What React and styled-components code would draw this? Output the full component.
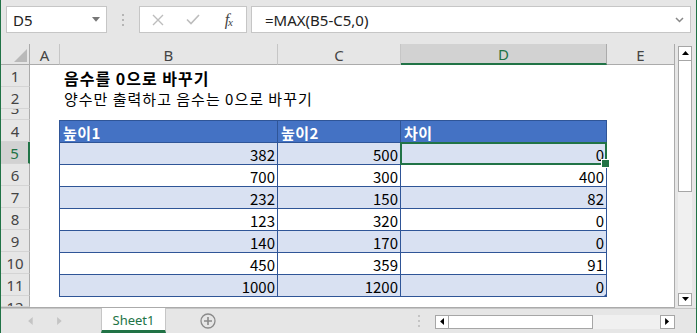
import styled, { createGlobalStyle, css } from 'styled-components';

const GREEN = '#217346';
const UI_FONT = `"Segoe UI", "Noto Sans", "Noto Sans CJK KR", sans-serif`;
const CELL_FONT = `"Noto Sans CJK KR", "Malgun Gothic", sans-serif`;

const GlobalStyle = createGlobalStyle`
  html, body {
    margin: 0;
    padding: 0;
    background: #fff;
  }
  * {
    box-sizing: border-box;
  }
`;

const Window = styled.div`
  width: 697px;
  height: 333px;
  display: flex;
  flex-direction: column;
  background: #e6e6e6;
  border-left: 1px solid ${GREEN};
  border-right: 1px solid ${GREEN};
  overflow: hidden;
  font-family: ${UI_FONT};
`;

/* ---------- formula bar ---------- */

const FormulaBar = styled.div`
  height: 44px;
  flex: none;
  display: flex;
  align-items: flex-start;
  padding: 6px 0 0 5px;
`;

const Box = styled.div`
  height: 27px;
  background: #fff;
  border: 1px solid #c6c6c6;
  display: flex;
  align-items: center;
`;

const NameBox = styled(Box)`
  width: 101px;
  padding: 0 6px;
  justify-content: space-between;
  font-size: 15px;
  color: #222;
`;

const Grip = styled.div`
  width: 32px;
  height: 27px;
  display: flex;
  align-items: center;
  justify-content: center;
`;

const FnBox = styled(Box)`
  width: 108px;
`;

const FnSlot = styled.div`
  flex: 1;
  display: flex;
  align-items: center;
  justify-content: center;
  color: #555;
`;

const Fx = styled.span`
  font-family: 'Liberation Serif', serif;
  font-style: italic;
  font-size: 16px;
  color: #444;
  letter-spacing: -1px;

  & > small {
    font-size: 11px;
    vertical-align: -1px;
  }
`;

const FormulaInput = styled(Box)`
  width: 440px;
  margin-left: 4px;
  padding: 0 6px 0 13px;
  justify-content: space-between;
  font-size: 15px;
  color: #222;
`;

/* ---------- sheet ---------- */

const SheetRow = styled.div`
  height: 264px;
  flex: none;
  display: flex;
`;

const Grid = styled.div`
  width: 674px;
  height: 264px;
  display: grid;
  grid-template-columns: 29px 30px 218px 123px 206px 67px;
  grid-template-rows: 21px 22px 22px 11px repeat(8, 22px) 11px;
  background: #fff;
  border-right: 1px solid #ababab;
  border-bottom: 1px solid #ababab;
  overflow: hidden;
  position: relative;
`;

const Corner = styled.div`
  background: #e6e6e6;
  border-right: 1px solid #ababab;
  border-bottom: 1px solid #ababab;
  display: flex;
  align-items: flex-end;
  justify-content: flex-end;
  padding: 0 2px 2px 0;
`;

const ColHeader = styled.div`
  background: ${({ $active }) => ($active ? '#d2d2d2' : '#e6e6e6')};
  color: ${({ $active }) => ($active ? GREEN : '#444')};
  border-right: 1px solid ${({ $active }) => ($active ? '#ababab' : '#c6c6c6')};
  border-bottom: ${({ $active }) =>
    $active ? `2px solid ${GREEN}` : '1px solid #ababab'};
  font-size: 15px;
  display: flex;
  align-items: center;
  justify-content: center;
  padding-top: 1px;
  ${({ $last }) => $last && 'border-right: 0;'}
`;

const RowHeader = styled.div`
  background: ${({ $active }) => ($active ? '#d2d2d2' : '#e6e6e6')};
  color: ${({ $active }) => ($active ? GREEN : '#444')};
  border-right: ${({ $active }) =>
    $active ? `2px solid ${GREEN}` : '1px solid #ababab'};
  border-bottom: 1px solid #d4d4d4;
  font-size: 15px;
  overflow: hidden;
  display: flex;
  justify-content: center;
  align-items: ${({ $clip }) =>
    $clip === 'top' ? 'flex-end' : $clip === 'bottom' ? 'flex-start' : 'center'};

  & > span {
    flex: none;
    height: 22px;
    line-height: 22px;
  }
`;

const SheetText = styled.div`
  grid-column: 3 / -1;
  grid-row: ${({ $row }) => $row};
  padding: 0 0 ${({ $bold }) => ($bold ? 1 : 3)}px 4px;
  font-family: ${CELL_FONT};
  font-size: ${({ $bold }) => ($bold ? 16 : 15)}px;
  line-height: 1;
  letter-spacing: 1px;
  font-weight: ${({ $bold }) => ($bold ? 700 : 400)};
  color: #000;
  white-space: nowrap;
  display: flex;
  align-items: flex-end;
`;

const Table = styled.div`
  grid-column: 3 / 6;
  grid-row: 5 / 13;
  align-self: start;
  margin-left: -1px;
  width: 548px;
  height: 177px;
  display: grid;
  grid-template-columns: 217px 122px 205px;
  grid-auto-rows: 21px;
  gap: 1px;
  background: #2f5597;
  border: 1px solid #2f5597;
  position: relative;
  z-index: 1;
`;

const TCell = styled.div`
  position: relative;
  font-family: ${CELL_FONT};
  font-size: 15px;
  white-space: nowrap;
  display: flex;
  align-items: center;
  padding: 1px 2px 0 3px;
  background: ${({ $band }) => ($band ? '#d9e1f2' : '#fff')};
  color: #000;
  justify-content: ${({ $num }) => ($num ? 'flex-end' : 'flex-start')};

  ${({ $head }) =>
    $head &&
    css`
      background: #4472c4;
      color: #fff;
      font-weight: 700;
      letter-spacing: 0.5px;
    `}

  ${({ $selected }) =>
    $selected &&
    css`
      &::after {
        content: '';
        position: absolute;
        inset: -1px;
        border: 2px solid ${GREEN};
      }
      &::before {
        content: '';
        position: absolute;
        right: -4px;
        bottom: -4px;
        width: 7px;
        height: 7px;
        background: ${GREEN};
        border: 1px solid #fff;
        z-index: 2;
      }
    `}

  ${({ $corner }) =>
    $corner &&
    css`
      &::after {
        content: '';
        position: absolute;
        right: -1px;
        bottom: -1px;
        border-style: solid;
        border-width: 0 0 4px 4px;
        border-color: transparent transparent #2f5597 transparent;
      }
    `}
`;

/* ---------- scroll bars ---------- */

const VScroll = styled.div`
  width: 21px;
  padding: 2px 4px 2px 3px;
  display: flex;
  flex-direction: column;
`;

const ScrollButton = styled.div`
  flex: none;
  width: ${({ $w }) => ($w ? `${$w}px` : 'auto')};
  height: ${({ $h }) => ($h ? `${$h}px` : 'auto')};
  background: #fff;
  border: 1px solid #a6a6a6;
  display: flex;
  align-items: center;
  justify-content: center;
`;

const Thumb = styled.div`
  flex: none;
  background: #fff;
  border: 1px solid #a6a6a6;
  ${({ $vertical }) =>
    $vertical
      ? css`
          height: 131px;
          border-top: 0;
        `
      : css`
          width: 144px;
          border-left: 0;
        `}
`;

const Track = styled.div`
  flex: 1;
  background: #f0f0f0;
`;

/* ---------- sheet tabs ---------- */

const TabBar = styled.div`
  flex: 1;
  display: flex;
`;

const TabNav = styled.div`
  width: 100px;
  border-top: 1px solid #c6c6c6;
  display: flex;
  align-items: center;
  gap: 24px;
  padding-left: 27px;
`;

const SheetTab = styled.div`
  width: 65px;
  background: #fff;
  border-left: 1px solid #c6c6c6;
  border-right: 1px solid #c6c6c6;
  border-bottom: 3px solid ${GREEN};
  color: ${GREEN};
  font-size: 13px;
  display: flex;
  align-items: center;
  justify-content: center;
  padding-top: 2px;
`;

const TabRest = styled.div`
  flex: 1;
  border-top: 1px solid #c6c6c6;
  display: flex;
  align-items: center;
  padding-left: 34px;
`;

const Spacer = styled.div`
  flex: 1;
`;

const HScroll = styled.div`
  width: 240px;
  height: 14px;
  margin: 1px 21px 0 14px;
  display: flex;
`;

const Dots = ({ color = '#b5b5b5' }) => (
  <svg width="4" height="14" viewBox="0 0 4 14">
    <rect x="1" y="1" width="2" height="2" fill={color} />
    <rect x="1" y="6" width="2" height="2" fill={color} />
    <rect x="1" y="11" width="2" height="2" fill={color} />
  </svg>
);

const Tri = ({ dir, color = '#000', size = 7 }) => {
  const pts = {
    up: '0,4 3.5,0 7,4',
    down: '0,0 7,0 3.5,4',
    left: '4,0 4,7 0,3.5',
    right: '0,0 4,3.5 0,7',
  }[dir];
  const vertical = dir === 'up' || dir === 'down';
  return (
    <svg
      width={vertical ? size : size * 0.6}
      height={vertical ? size * 0.6 : size}
      viewBox={vertical ? '0 0 7 4' : '0 0 4 7'}
    >
      <polygon points={pts} fill={color} />
    </svg>
  );
};

const rows = [
  ['높이1', '높이2', '차이'],
  [382, 500, 0],
  [700, 300, 400],
  [232, 150, 82],
  [123, 320, 0],
  [140, 170, 0],
  [450, 359, 91],
  [1000, 1200, 0],
];

const columns = ['A', 'B', 'C', 'D', 'E'];

export default function App() {
  return (
    <>
      <GlobalStyle />
      <Window>
        <FormulaBar>
          <NameBox>
            <span>D5</span>
            <Tri dir="down" color="#777" size={8} />
          </NameBox>
          <Grip>
            <Dots />
          </Grip>
          <FnBox>
            <FnSlot>
              <svg width="12" height="12" viewBox="0 0 12 12">
                <path d="M1 1 L11 11 M11 1 L1 11" stroke="#bdbdbd" strokeWidth="1.4" />
              </svg>
            </FnSlot>
            <FnSlot>
              <svg width="14" height="11" viewBox="0 0 14 11">
                <path d="M1 5.5 L5 9.5 L13 1" stroke="#bdbdbd" strokeWidth="1.6" fill="none" />
              </svg>
            </FnSlot>
            <FnSlot>
              <Fx>
                f<small>x</small>
              </Fx>
            </FnSlot>
          </FnBox>
          <FormulaInput>
            <span>=MAX(B5-C5,0)</span>
            <svg width="9" height="6" viewBox="0 0 9 6">
              <path d="M1 1 L4.5 4.5 L8 1" stroke="#888" strokeWidth="1.5" fill="none" />
            </svg>
          </FormulaInput>
        </FormulaBar>

        <SheetRow>
          <Grid>
            <Corner>
              <svg width="13" height="13" viewBox="0 0 13 13">
                <polygon points="13,0 13,13 0,13" fill="#b9b9b9" />
              </svg>
            </Corner>
            {columns.map((c) => (
              <ColHeader key={c} $active={c === 'D'} $last={c === 'E'}>
                {c}
              </ColHeader>
            ))}
            {Array.from({ length: 12 }, (_, i) => (
              <RowHeader
                key={i}
                style={{ gridRow: i + 2, gridColumn: 1 }}
                $active={i === 4}
                $clip={i === 2 ? 'top' : i === 11 ? 'bottom' : undefined}
              >
                <span>{i + 1}</span>
              </RowHeader>
            ))}
            <SheetText $row={2} $bold>
              음수를 0으로 바꾸기
            </SheetText>
            <SheetText $row={3}>양수만 출력하고 음수는 0으로 바꾸기</SheetText>
            <Table>
              {rows.map((r, ri) =>
                r.map((v, ci) => (
                  <TCell
                    key={`${ri}-${ci}`}
                    $head={ri === 0}
                    $band={ri % 2 === 1}
                    $num={ri > 0}
                    $selected={ri === 1 && ci === 2}
                    $corner={ri === 7 && ci === 2}
                  >
                    {v}
                  </TCell>
                ))
              )}
            </Table>
          </Grid>
          <VScroll>
            <ScrollButton $h={15}>
              <Tri dir="up" />
            </ScrollButton>
            <Thumb $vertical />
            <Track />
            <ScrollButton $h={13}>
              <Tri dir="down" />
            </ScrollButton>
          </VScroll>
        </SheetRow>

        <TabBar>
          <TabNav>
            <Tri dir="left" color="#c4c4c4" size={8} />
            <Tri dir="right" color="#c4c4c4" size={8} />
          </TabNav>
          <SheetTab>Sheet1</SheetTab>
          <TabRest>
            <svg width="16" height="16" viewBox="0 0 16 16">
              <circle cx="8" cy="8" r="7" fill="none" stroke="#8a8a8a" strokeWidth="1.3" />
              <path d="M8 4 V12 M4 8 H12" stroke="#8a8a8a" strokeWidth="1.6" />
            </svg>
            <Spacer />
            <Dots color="#c4c4c4" />
            <HScroll>
              <ScrollButton $w={14}>
                <Tri dir="left" />
              </ScrollButton>
              <Thumb />
              <Track />
              <ScrollButton $w={15}>
                <Tri dir="right" />
              </ScrollButton>
            </HScroll>
          </TabRest>
        </TabBar>
      </Window>
    </>
  );
}
